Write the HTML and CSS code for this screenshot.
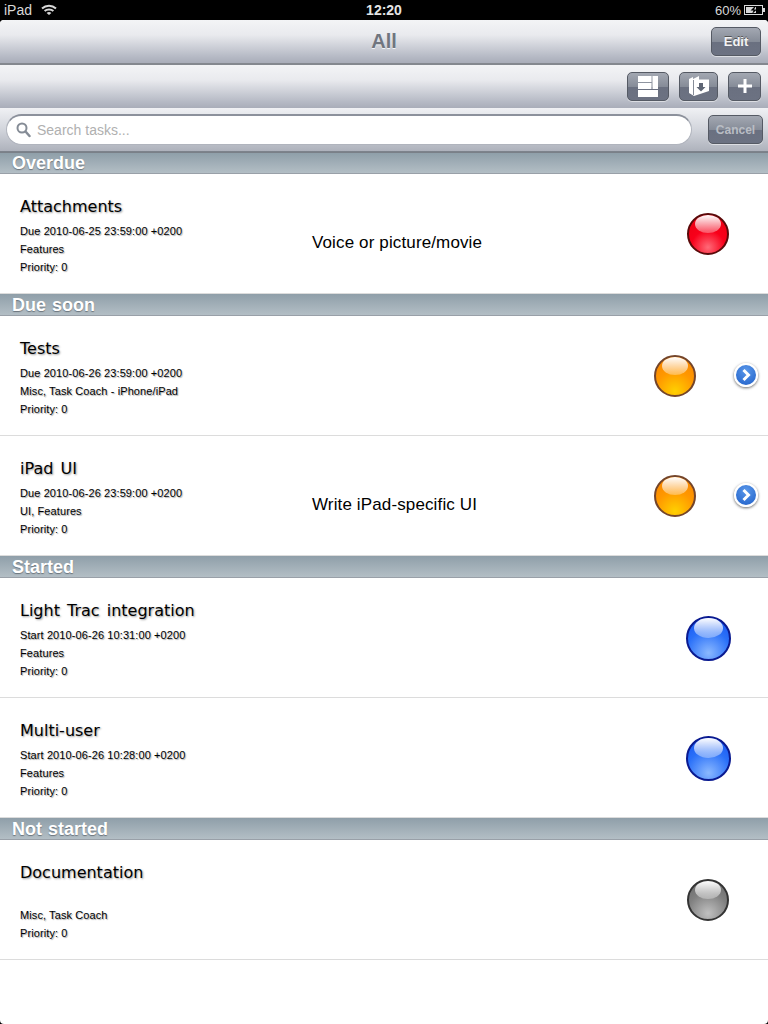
FILE: index.html
```html
<!DOCTYPE html>
<html lang="en">
<head>
  <meta charset="UTF-8">
  <meta name="viewport" content="width=device-width, initial-scale=1.0">
  <title>All</title>
  <link rel="stylesheet" href="styles.css">
</head>
<body>
  <div class="status-bar">
    <div class="status-left">
      <span>iPad</span>
      <svg class="wifi" width="16" height="12" viewBox="0 0 16 12">
        <path d="M1 4.500C5 .8 11 .8 15 4.500" fill="none" stroke="#d8d8d8" stroke-width="2"/>
        <path d="M3.600 7C6 4.900 10 4.900 12.400 7" fill="none" stroke="#d8d8d8" stroke-width="2"/>
        <path d="M5.600 8.900L8 11l2.400-2.100C9 7.800 7 7.800 5.600 8.900z" fill="#d8d8d8"/>
      </svg>
    </div>
    <div class="status-time">12:20</div>
    <div class="status-right">
      <span>60%</span>
      <svg width="21" height="10" viewBox="0 0 21 10">
        <rect x=".5" y=".5" width="18" height="9" fill="none" stroke="#d8d8d8"/>
        <rect x="2" y="2" width="10" height="6" fill="#d8d8d8"/>
        <rect x="19" y="3" width="2" height="4" fill="#d8d8d8"/>
        <path d="M11 1L6.500 5.500h3L8 9l5-4.500h-3L12 1z" fill="#000"/>
      </svg>
    </div>
  </div>

  <div class="screen">
    <div class="nav-bar">
      <h1>All</h1>
      <button class="bar-btn edit-btn">Edit</button>
    </div>

    <div class="tool-bar">
      <button class="bar-btn layout-btn">
        <svg width="20" height="21" viewBox="0 0 20 21">
          <path d="M0 0h13.500v6H0zM14.500 0H20v13h-5.500zM0 7h13.500v6H0zM0 14h20v7H0z" fill="#fff"/>
        </svg>
      </button>
      <button class="bar-btn folder-btn">
        <svg width="20" height="20" viewBox="0 0 20 20">
          <path d="M0 3l4-2v2l6-3v3.500h10V15L5 20l-5-3z" fill="#fff"/>
          <path d="M4.500 4v15" stroke="#868c98" stroke-width="1" fill="none"/>
          <path d="M10 7h4v4h2.500L12 15.500 7.500 11H10z" fill="#5f6675"/>
        </svg>
      </button>
      <button class="bar-btn add-btn">
        <svg width="14" height="14" viewBox="0 0 14 14"><path d="M5.500 0h3v5.500H14v3H8.500V14h-3V8.500H0v-3h5.500z" fill="#fff"/></svg>
      </button>
    </div>

    <div class="search-bar">
      <div class="search-field">
        <svg width="15" height="16" viewBox="0 0 15 16">
          <circle cx="6" cy="6" r="4.500" fill="none" stroke="#858c96" stroke-width="2"/>
          <path d="M9.500 9.500L13.500 14" stroke="#858c96" stroke-width="2.500" stroke-linecap="round"/>
        </svg>
        <span>Search tasks...</span>
      </div>
      <button class="bar-btn cancel-btn">Cancel</button>
    </div>

    <div class="section-header">Overdue</div>
    <div class="task-row">
      <div class="task-info">
        <div class="task-title">Attachments</div>
        <div class="task-line">Due 2010-06-25 23:59:00 +0200</div>
        <div class="task-line">Features</div>
        <div class="task-line">Priority: 0</div>
      </div>
      <div class="task-note">Voice or picture/movie</div>
      <div class="ball ball-red"></div>
    </div>

    <div class="section-header">Due soon</div>
    <div class="task-row has-more">
      <div class="task-info">
        <div class="task-title">Tests</div>
        <div class="task-line">Due 2010-06-26 23:59:00 +0200</div>
        <div class="task-line">Misc, Task Coach - iPhone/iPad</div>
        <div class="task-line">Priority: 0</div>
      </div>
      <div class="task-note"></div>
      <div class="ball ball-orange"></div>
      <div class="more-btn"><svg width="14" height="14" viewBox="0 0 14 14"><path d="M4.500 2L9.500 7l-5 5" fill="none" stroke="#fff" stroke-width="3"/></svg></div>
    </div>
    <div class="task-row has-more">
      <div class="task-info">
        <div class="task-title">iPad UI</div>
        <div class="task-line">Due 2010-06-26 23:59:00 +0200</div>
        <div class="task-line">UI, Features</div>
        <div class="task-line">Priority: 0</div>
      </div>
      <div class="task-note">Write iPad-specific UI</div>
      <div class="ball ball-orange"></div>
      <div class="more-btn"><svg width="14" height="14" viewBox="0 0 14 14"><path d="M4.500 2L9.500 7l-5 5" fill="none" stroke="#fff" stroke-width="3"/></svg></div>
    </div>

    <div class="section-header">Started</div>
    <div class="task-row">
      <div class="task-info">
        <div class="task-title">Light Trac integration</div>
        <div class="task-line">Start 2010-06-26 10:31:00 +0200</div>
        <div class="task-line">Features</div>
        <div class="task-line">Priority: 0</div>
      </div>
      <div class="task-note"></div>
      <div class="ball ball-blue"></div>
    </div>
    <div class="task-row">
      <div class="task-info">
        <div class="task-title">Multi-user</div>
        <div class="task-line">Start 2010-06-26 10:28:00 +0200</div>
        <div class="task-line">Features</div>
        <div class="task-line">Priority: 0</div>
      </div>
      <div class="task-note"></div>
      <div class="ball ball-blue"></div>
    </div>

    <div class="section-header">Not started</div>
    <div class="task-row">
      <div class="task-info">
        <div class="task-title">Documentation</div>
        <div class="task-line">&nbsp;</div>
        <div class="task-line">Misc, Task Coach</div>
        <div class="task-line">Priority: 0</div>
      </div>
      <div class="task-note"></div>
      <div class="ball ball-gray"></div>
    </div>
  </div>
</body>
</html>
```

FILE: styles.css
```css
html, body {
  height: 100%;
}

body {
  margin: 0;
  background-color: #000;
  font-family: "Liberation Sans", Arial, sans-serif;
  overflow: hidden;
}

button {
  font-family: inherit;
  padding: 0;
}

/* status bar */
.status-bar {
  height: 20px;
  display: flex;
  align-items: center;
  justify-content: space-between;
  padding: 0 3px 0 4px;
  color: #d8d8d8;
  font-size: 13px;
  position: relative;
}

.status-left, .status-right {
  display: flex;
  align-items: center;
  gap: 9px;
}

.status-left span {
  font-size: 14px;
}

.status-right {
  gap: 3px;
}

.status-time {
  position: absolute;
  left: 0;
  right: 0;
  text-align: center;
  font-weight: bold;
  font-size: 14px;
  color: #e4e4e4;
}

/* main area */
.screen {
  height: 1004px;
  background-color: #fff;
  border-radius: 4px;
  overflow: hidden;
}

.nav-bar, .tool-bar {
  display: flex;
  align-items: center;
  background: linear-gradient(#f3f4f6 0%, #e9eaee 35%, #b6bac5 85%, #a9adb9 100%);
  box-sizing: border-box;
  border-bottom: 2px solid #84888f;
}

.nav-bar {
  height: 45px;
  justify-content: flex-end;
  padding: 0 7px 1px 0;
  position: relative;
}

.nav-bar h1 {
  position: absolute;
  left: 0;
  right: 0;
  margin: 0;
  text-align: center;
  font-size: 20px;
  font-weight: bold;
  color: #70757f;
  text-shadow: 0 1px 0 #f2f3f5;
}

.tool-bar {
  height: 43px;
  justify-content: flex-end;
  gap: 10px;
  padding: 0 7px 1px 0;
  border-bottom: none;
}

.bar-btn {
  display: flex;
  align-items: center;
  justify-content: center;
  height: 29px;
  box-sizing: border-box;
  border: 1px solid #555a64;
  border-radius: 5px;
  background: linear-gradient(#a3a8b2 0%, #868c98 50%, #6a7080 51%, #6c7282 100%);
  color: #f2f3f5;
  font-size: 13px;
  font-weight: bold;
  text-shadow: 0 -1px 0 #555;
  box-shadow: 0 1px 0 rgba(255, 255, 255, 0.5);
}

.edit-btn {
  width: 50px;
}

.layout-btn {
  width: 42px;
}

.folder-btn {
  width: 39px;
}

.add-btn {
  width: 33px;
}

.search-bar {
  height: 44px;
  box-sizing: border-box;
  display: flex;
  align-items: center;
  gap: 16px;
  padding: 0 5px 0 6px;
  background: linear-gradient(#f0f1f4 0%, #d2d5dc 50%, #aeb2bc 100%);
  border-bottom: 1px solid #7d838c;
}

.search-field {
  width: 686px;
  height: 31px;
  box-sizing: border-box;
  display: flex;
  align-items: center;
  gap: 6px;
  padding-left: 9px;
  background-color: #fff;
  border-radius: 16px;
  border: 1px solid #b0b4bd;
  border-top: 2px solid #8c919c;
  color: #b0b0b0;
  font-size: 14px;
}

.cancel-btn {
  width: 55px;
  color: #b9bdc4;
  font-size: 12px;
  text-shadow: none;
}

/* sections */
.section-header {
  height: 22px;
  box-sizing: border-box;
  padding-left: 12px;
  border-top: 1px solid #7a8088;
  border-bottom: 1px solid #99a0a8;
  background: linear-gradient(#8f9fa9, #b3bec5);
  color: #fff;
  font-size: 18px;
  font-weight: bold;
  line-height: 20px;
  word-spacing: 1px;
  text-shadow: 0 1px 1px #6b747c;
}

.task-row + .section-header {
  height: 23px;
  margin-top: -1px;
  line-height: 22px;
}

.task-row {
  height: 120px;
  box-sizing: border-box;
  display: flex;
  align-items: center;
  padding-left: 20px;
  border-bottom: 1px solid #dcdcdc;
  position: relative;
}

.task-info {
  width: 292px;
  flex-shrink: 0;
  align-self: flex-start;
  padding-top: 23px;
}

.task-title {
  font-family: "DejaVu Sans", sans-serif;
  font-size: 16px;
  line-height: 20px;
  word-spacing: 2px;
  color: #000;
  text-shadow: 1px 1px 2px #999;
  margin-bottom: 5px;
}

.task-line {
  font-size: 11px;
  line-height: 18px;
  letter-spacing: 0.1px;
  color: #000;
  text-shadow: 1px 1px 1px #aaa;
}

.task-note {
  flex: 1;
  font-size: 17px;
  letter-spacing: 0.13px;
  margin-top: 18px;
  color: #000;
}

/* glossy status balls */
.ball {
  width: 42px;
  height: 42px;
  box-sizing: border-box;
  flex-shrink: 0;
  border-radius: 50%;
  border: 2px solid;
  position: relative;
  margin-right: 39px;
}

.has-more .ball {
  margin-right: 72px;
}

.ball::after {
  content: "";
  position: absolute;
  left: 15%;
  top: 0;
  width: 70%;
  height: 48%;
  border-radius: 50%;
  background: linear-gradient(rgba(255, 255, 255, 1), rgba(255, 255, 255, 0.3));
}

.ball-red {
  border-color: #5a0a0a;
  background: radial-gradient(circle at 50% 85%, #ff6a78 0%, #f8001a 45%, #e80010 100%);
}

.ball-orange {
  border-color: #74452a;
  background: radial-gradient(circle at 50% 90%, #ffd000 0%, #ff9800 50%, #f78000 100%);
}

.ball-blue {
  width: 45px;
  height: 45px;
  margin-top: 2px;
  margin-right: 37px;
  border-color: #0a1a90;
  background: radial-gradient(circle at 50% 85%, #8ab8ff 0%, #2a70f8 55%, #1450f0 100%);
}

.ball-gray {
  border-color: #333;
  background: radial-gradient(circle at 50% 85%, #c0c0c0 0%, #808080 55%, #666 100%);
}

.more-btn {
  position: absolute;
  right: 10px;
  top: 47px;
  width: 24px;
  height: 24px;
  box-sizing: border-box;
  display: flex;
  align-items: center;
  justify-content: center;
  border-radius: 50%;
  border: 2px solid #fff;
  background: radial-gradient(circle at 50% 30%, #5a98ea, #1f5fc8);
  box-shadow: 0 1px 3px rgba(0, 0, 0, 0.6);
}
```
